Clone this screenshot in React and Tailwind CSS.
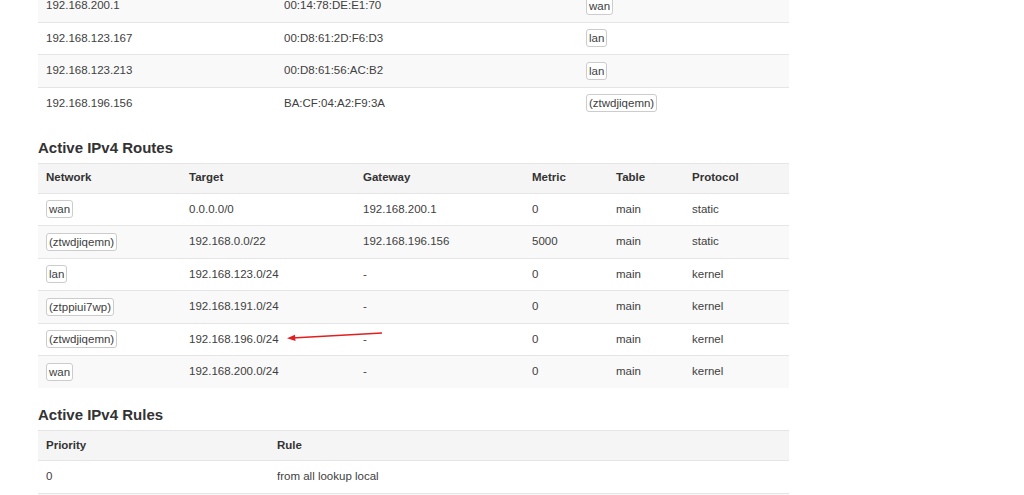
import React from 'react';

const Badge = ({ children }) => (
  <span className="inline-block border border-[#ccc] rounded-[3px] bg-white px-[2px] leading-[16px]">{children}</span>
);

function Table({ cols, rows, header }) {
  return (
    <table className="w-[751px] border-collapse table-fixed text-[11.5px] text-[#404040]">
      <colgroup>
        {cols.map((w, i) => <col key={i} style={{ width: w }} />)}
      </colgroup>
      {header && (
        <thead>
          <tr className="h-[30px] bg-[#f5f5f5]">
            {header.map((h) => <th key={h} className="text-left font-bold px-2 text-[#333] border-t border-[#e5e5e5]">{h}</th>)}
          </tr>
        </thead>
      )}
      <tbody>
        {rows.map((r, i) => (
          <tr key={i} className={`h-[32.5px] border-t border-[#e5e5e5] ${i % 2 === (header ? 1 : 0) ? 'bg-[#f9f9f9]' : 'bg-white'}`}>
            {r.map((c, j) => <td key={j} className="px-2">{c}</td>)}
          </tr>
        ))}
      </tbody>
    </table>
  );
}

export default function App() {
  return (
    <div className="relative bg-white h-[495px] overflow-hidden pl-[38px]" style={{ fontFamily: '"Liberation Sans", Arial, sans-serif' }}>
      <div className="-mt-[11px]">
        <Table cols={[238, 302, 211]} rows={[
          ['192.168.200.1', '00:14:78:DE:E1:70', <Badge>wan</Badge>],
          ['192.168.123.167', '00:D8:61:2D:F6:D3', <Badge>lan</Badge>],
          ['192.168.123.213', '00:D8:61:56:AC:B2', <Badge>lan</Badge>],
          ['192.168.196.156', 'BA:CF:04:A2:F9:3A', <Badge>(ztwdjiqemn)</Badge>],
        ]} />
      </div>
      <h3 className="text-[15px] font-bold text-[#333] mt-[19px] mb-[6px] leading-[18px]">Active IPv4 Routes</h3>
      <Table cols={[143, 174, 169, 84, 76, 105]}
        header={['Network', 'Target', 'Gateway', 'Metric', 'Table', 'Protocol']}
        rows={[
          [<Badge>wan</Badge>, '0.0.0.0/0', '192.168.200.1', '0', 'main', 'static'],
          [<Badge>(ztwdjiqemn)</Badge>, '192.168.0.0/22', '192.168.196.156', '5000', 'main', 'static'],
          [<Badge>lan</Badge>, '192.168.123.0/24', '-', '0', 'main', 'kernel'],
          [<Badge>(ztppiui7wp)</Badge>, '192.168.191.0/24', '-', '0', 'main', 'kernel'],
          [<Badge>(ztwdjiqemn)</Badge>, '192.168.196.0/24', '-', '0', 'main', 'kernel'],
          [<Badge>wan</Badge>, '192.168.200.0/24', '-', '0', 'main', 'kernel'],
        ]} />
      <h3 className="text-[15px] font-bold text-[#333] mt-[18px] mb-[6px] leading-[18px]">Active IPv4 Rules</h3>
      <Table cols={[231, 520]} header={['Priority', 'Rule']}
        rows={[['0', 'from all lookup local'], ['', '']]} />
      <svg className="absolute left-[284px] top-[328px]" width="102" height="16" viewBox="0 0 102 16">
        <line x1="98" y1="5" x2="8" y2="10" stroke="#e02020" strokeWidth="1.3" />
        <polygon points="3,10.3 11,6.8 11.5,13" fill="#e02020" />
      </svg>
    </div>
  );
}
